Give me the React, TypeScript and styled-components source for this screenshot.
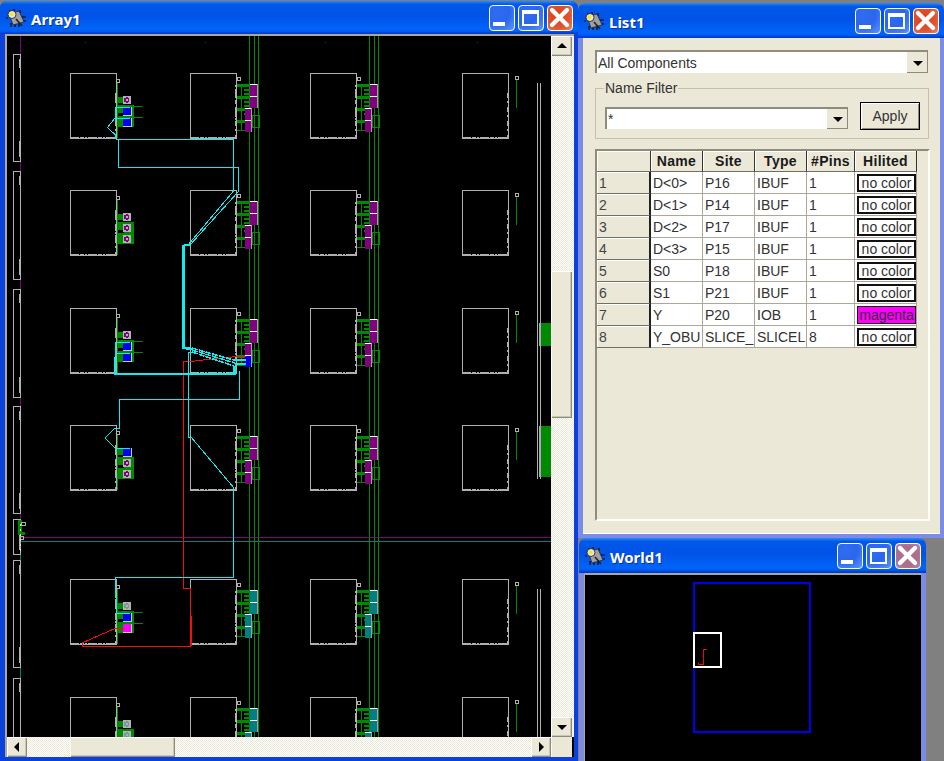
import React from 'react';
import styled, {createGlobalStyle} from 'styled-components';

const GlobalStyle = createGlobalStyle`
    html, body {
        margin: 0;
        padding: 0;
        background: #808080;
    }
    body {
        font-family: "Liberation Sans", Arial, sans-serif;
        font-size: 14px;
        color: #222;
    }
`;

const TAN = '#ebe8d8';
const GREY = '#b0b0b0';
const GREEN = '#008a00';
const PURPLE = '#800080';
const TEAL = '#008080';
const CYAN = '#10ecf0';
const RED = '#f01010';

const COLS_X = [70, 190, 310, 462];
const ROWS_Y = [73, 190, 308, 425, 579, 697];

type Pin = 'grey' | 'blue' | 'magenta';

const PINS: Pin[][] = [
    ['grey', 'blue', 'blue'],
    ['grey', 'grey', 'grey'],
    ['grey', 'blue', 'blue'],
    ['blue', 'grey', 'grey'],
    ['grey', 'blue', 'magenta'],
    ['grey', 'grey', 'grey'],
];

const THIN_ROUTES = [
    '115.5,107 130,107',
    '115.5,107 115.5,118',
    '130,118 115,118 107.5,127.5 115.5,135 116,139',
    '116,139 233.5,139 233.5,191 188,245',
    '118,139 118,167 238,167 238,192 190,245',
    '115,342 130,342',
    '115,342 115.5,357',
    '115,353 130,353',
    '192,352 188.5,352 188.5,437 191,437 234,488 233.5,577 115,577 115,597 116,597 116,613 130,613',
    '239,371 239,399 119.5,399 119.5,428 115,428 105,438 116,449',
    '116,448 130,448',
];

const FAN_ROUTES = ['192,348 237,361', '192,350 235,363', '192,352 234,366'];

const THICK_ROUTES = [
    '183.5,245 190,245',
    '183.5,245 183.5,348 192,349',
    '115,357 115,374 234.5,374 234.5,366',
    '235,360 246,360',
    '235,364 246,364',
];

const RED_ROUTES = [
    '183,361 195,361 203,360 232,357 246,356',
    '183,361 183,588 190.5,588 190.5,646 82,646 82,643 116,628 125,628',
];

const LEFT_STRIPS = [
    [54, 161],
    [171, 279],
    [289, 397],
    [406, 513],
    [519, 554],
    [560, 667],
    [678, 760],
];

const COMPONENTS = [
    {name: 'D<0>', site: 'P16', type: 'IBUF', pins: '1', hilited: 'no color'},
    {name: 'D<1>', site: 'P14', type: 'IBUF', pins: '1', hilited: 'no color'},
    {name: 'D<2>', site: 'P17', type: 'IBUF', pins: '1', hilited: 'no color'},
    {name: 'D<3>', site: 'P15', type: 'IBUF', pins: '1', hilited: 'no color'},
    {name: 'S0', site: 'P18', type: 'IBUF', pins: '1', hilited: 'no color'},
    {name: 'S1', site: 'P21', type: 'IBUF', pins: '1', hilited: 'no color'},
    {name: 'Y', site: 'P20', type: 'IOB', pins: '1', hilited: 'magenta'},
    {name: 'Y_OBU', site: 'SLICE_', type: 'SLICEL', pins: '8', hilited: 'no color'},
];

const ChipBox = ({x, y}: {x: number; y: number}) => (
    <g fill='none' stroke={GREY}>
        <rect x={x + 0.5} y={y + 0.5} width={46} height={65} />
        <line x1={x} y1={y + 65} x2={x + 46} y2={y + 65} strokeWidth={2} strokeDasharray='9 1 4 1 2 1' />
        <line x1={x + 46} y1={y + 20} x2={x + 46} y2={y + 65} strokeWidth={2} strokeDasharray='5 3 2 4' />
    </g>
);

const PinCell = ({y, kind, pins}: {y: number; kind: string; pins: Pin[]}) => {
    const x = 116;
    const hasLines = pins.filter(p => p !== 'grey').length >= 2;
    const centre = kind === 'teal' ? '#6f9a9a' : PURPLE;
    return (
        <g>
            <rect x={x + 0.5} y={y + 6.5} width={3} height={3} fill='none' stroke={GREY} />
            <line x1={x + 1} y1={y + 10} x2={x + 1} y2={y + 65} stroke={GREEN} />
            <rect x={x + 1} y={y + 24} width={7} height={6} fill={GREEN} />
            <rect x={x + 2} y={y + 32} width={16} height={22} fill={GREEN} />
            <rect x={x + 2} y={y + 40} width={6} height={3} fill='#000' />
            <rect x={x - 1} y={y + 23} width={2} height={7} fill={GREY} />
            <rect x={x - 1} y={y + 34} width={2} height={7} fill={GREY} />
            <rect x={x - 1} y={y + 45} width={2} height={7} fill={GREY} />
            {hasLines && <line x1={x + 8} y1={y + 33.5} x2={x + 27} y2={y + 33.5} stroke={GREEN} />}
            {hasLines && <line x1={x + 8} y1={y + 44.5} x2={x + 27} y2={y + 44.5} stroke={GREEN} />}
            {pins.map((pin, i) => {
                const py = y + 23 + i * 11;
                if (pin === 'grey') {
                    return (
                        <g key={i}>
                            <rect x={123} y={py} width={7.5} height={8} fill='#b4b0b4' />
                            <circle cx={126.8} cy={py + 4} r={2} fill='none' stroke={centre} strokeWidth={1.4} />
                        </g>
                    );
                }
                return (
                    <g key={i}>
                        <rect x={123} y={py} width={8} height={8} fill={pin === 'blue' ? '#0000f0' : '#ff00ff'} />
                        <path d={`M123 ${py + 8.5}h8V${py}`} fill='none' stroke='#c8c8c8' />
                    </g>
                );
            })}
        </g>
    );
};

const Slice = ({x, y, w, h, fill}: {x: number; y: number; w: number; h: number; fill: string}) => (
    <g>
        <rect x={x} y={y} width={w} height={h} fill={fill} />
        <path d={`M${x} ${y + 0.5}h${w}`} stroke='#fff' />
        <path d={`M${x + w + 0.5} ${y}v${h}`} stroke='#a89ca8' />
    </g>
);

const SliceCell = ({r, y, fill, last}: {r: number; y: number; fill: string; last: string}) => (
    <g>
        <rect x={r + 1.5} y={y + 4.5} width={3} height={3} fill='none' stroke={GREY} />
        <g stroke={GREEN}>
            <line x1={r + 5.5} y1={y + 12} x2={r + 5.5} y2={y + 57} />
            <line x1={r + 1} y1={y + 12.5} x2={r + 14} y2={y + 12.5} strokeWidth={3} />
            <line x1={r + 8} y1={y + 16.5} x2={r + 14} y2={y + 16.5} strokeWidth={2} />
            <line x1={r + 8} y1={y + 20.5} x2={r + 14} y2={y + 20.5} strokeWidth={2} />
            <line x1={r + 1} y1={y + 24.5} x2={r + 14} y2={y + 24.5} strokeWidth={3} />
            <line x1={r + 8} y1={y + 29} x2={r + 14} y2={y + 29} strokeWidth={2} />
            <line x1={r + 8} y1={y + 32.5} x2={r + 14} y2={y + 32.5} strokeWidth={2} />
            <line x1={r + 1} y1={y + 36.5} x2={r + 9} y2={y + 36.5} strokeWidth={3} />
            <line x1={r + 8} y1={y + 40.5} x2={r + 9} y2={y + 40.5} strokeWidth={2} />
            <line x1={r + 1} y1={y + 48.5} x2={r + 9} y2={y + 48.5} strokeWidth={3} />
            <line x1={r + 1} y1={y + 57.5} x2={r + 9} y2={y + 57.5} />
            <rect x={r + 16.5} y={y + 42.5} width={7} height={12} fill='none' />
        </g>
        <line x1={r} y1={y + 12} x2={r} y2={y + 60} stroke={GREY} strokeWidth={2} strokeDasharray='2 2 4 3' />
        <Slice x={r + 14} y={y + 11} w={7} h={12} fill={fill} />
        <Slice x={r + 14} y={y + 23} w={7} h={12} fill={fill} />
        <Slice x={r + 9} y={y + 35} w={6} h={12} fill={fill} />
        <Slice x={r + 9} y={y + 47} w={6} h={12} fill={last} />
    </g>
);

const Layout = () => (
    <LayoutSvg viewBox='7 36 544 701' width={544} height={701}>
        {[85, 205, 325, 477].map(x => (
            <rect key={x} x={x} y={42} width={1} height={1} fill='#2a3a3a' />
        ))}
        <line x1={20.5} y1={36} x2={20.5} y2={519} stroke={PURPLE} />
        <line x1={20.5} y1={554} x2={20.5} y2={737} stroke={TEAL} />
        <line x1={21} y1={537.5} x2={551} y2={537.5} stroke={PURPLE} />
        <line x1={21} y1={541.5} x2={551} y2={541.5} stroke={TEAL} />
        {[249.5, 254.5, 258.5, 369.5, 374.5, 378.5].map(x => (
            <line key={x} x1={x} y1={36} x2={x} y2={737} stroke={GREEN} />
        ))}
        {LEFT_STRIPS.map(([top, bottom]) => (
            <g key={top} fill='none' stroke={GREY}>
                <rect x={13.5} y={top + 0.5} width={7} height={bottom - top} />
                <line x1={20} y1={top + 5} x2={20} y2={top + 14} strokeWidth={2} />
                <line x1={20} y1={bottom - 20} x2={20} y2={bottom - 4} strokeWidth={2} />
            </g>
        ))}
        <g>
            <rect x={18} y={520} width={4} height={14} fill={GREEN} />
            <rect x={18} y={532} width={7} height={3} fill={GREEN} />
            <rect x={21.5} y={522.5} width={4} height={3} fill='none' stroke={GREY} />
            <rect x={20.5} y={536.5} width={3} height={3} fill='none' stroke={GREY} />
            <line x1={20} y1={524} x2={20} y2={553} stroke='#e0e0e0' strokeDasharray='2 3' />
        </g>
        {ROWS_Y.map(y => COLS_X.map(x => <ChipBox key={`${x}-${y}`} x={x} y={y} />))}
        {ROWS_Y.map((y, i) => (
            <PinCell key={y} y={y} kind={i >= 4 ? 'teal' : 'purple'} pins={PINS[i]} />
        ))}
        {ROWS_Y.map((y, i) => {
            const fill = i >= 4 ? TEAL : PURPLE;
            return (
                <g key={y}>
                    <SliceCell r={236} y={y} fill={fill} last={i === 2 ? '#0000f0' : fill} />
                    <SliceCell r={356} y={y} fill={fill} last={fill} />
                    <rect x={515.5} y={y + 3.5} width={3} height={3} fill='none' stroke={GREY} />
                    <line x1={516.5} y1={y + 7} x2={516.5} y2={y + 35} stroke={GREEN} />
                </g>
            );
        })}
        <line x1={539} y1={83} x2={539} y2={479} stroke={GREY} strokeWidth={4} />
        <line x1={539} y1={83} x2={539} y2={479} stroke='#000' strokeWidth={2} />
        <line x1={539} y1={589} x2={539} y2={737} stroke={GREY} strokeWidth={4} />
        <line x1={539} y1={589} x2={539} y2={737} stroke='#000' strokeWidth={2} />
        <rect x={539} y={323} width={12} height={23} fill={GREEN} />
        <rect x={539} y={426} width={12} height={51} fill={GREEN} />
        <line x1={540} y1={323} x2={540} y2={346} stroke='#a8a8b8' strokeWidth={2} />
        <line x1={540} y1={426} x2={540} y2={477} stroke='#a8a8b8' strokeWidth={2} />
        <g fill='none' stroke={RED}>
            {RED_ROUTES.map(points => (
                <polyline key={points} points={points} />
            ))}
            <line x1={191} y1={616} x2={191} y2={646} strokeWidth={2} />
        </g>
        <g fill='none' stroke={CYAN}>
            {THIN_ROUTES.map(points => (
                <polyline key={points} points={points} />
            ))}
            {FAN_ROUTES.map(points => (
                <polyline key={points} points={points} strokeWidth={1.5} strokeDasharray='6 1' />
            ))}
            {THICK_ROUTES.map(points => (
                <polyline key={points} points={points} strokeWidth={2.4} />
            ))}
        </g>
    </LayoutSvg>
);

const WorldView = () => (
    <WorldSvg viewBox='585 575 335 186' width={335} height={186}>
        <rect x={694} y={583} width={116} height={149} fill='none' stroke='#0000ee' strokeWidth={2} />
        <rect x={694} y={632.5} width={27} height={34} fill='none' stroke='#fff' strokeWidth={2} />
        <path d='M707 649.5h-3.5v14.5h-5.5v-1.5' fill='none' stroke='#e01010' />
    </WorldSvg>
);

const AppIcon = () => (
    <IconSvg viewBox='0 0 20 18' width={20} height={18}>
        <path d='M4 4V1M8 3V0M14 4V1M16 8h4M17 12h3M2 9H0M5 14v4M9 15v3M13 15v3' fill='none' stroke='#000' strokeWidth={1.2} />
        <path d='M3 5l10-3 5 11-11 3z' fill='#a0a0a0' stroke='#222' strokeWidth={0.8} />
        <circle cx={6} cy={5.5} r={4} fill='#e8e8e8' stroke='#222' strokeWidth={0.9} />
        <circle cx={5.6} cy={5.2} r={2} fill='#f4e820' />
        <path d='M10 10l6 7' stroke='#222' strokeWidth={1.6} />
    </IconSvg>
);

const TitleButtons = ({fadedClose}: {fadedClose?: boolean}) => (
    <ButtonRow>
        <TitleButton type='button' aria-label='Minimize'>
            <svg viewBox='0 0 26 26' width={26} height={26}>
                <rect x={4} y={17} width={12} height={4} fill='#fff' />
            </svg>
        </TitleButton>
        <TitleButton type='button' aria-label='Maximize'>
            <svg viewBox='0 0 26 26' width={26} height={26}>
                <path d='M4 5h17v16H4z M6 9v10h13V9z' fill='#fff' fillRule='evenodd' />
            </svg>
        </TitleButton>
        <CloseButton type='button' aria-label='Close' $faded={fadedClose}>
            <svg viewBox='0 0 26 26' width={26} height={26}>
                <path d='M5 5l15 15M20 5L5 20' stroke='#fff' strokeWidth={4.4} strokeLinecap='round' />
            </svg>
        </CloseButton>
    </ButtonRow>
);

const Arrow = ({dir}: {dir: 'up' | 'down' | 'left' | 'right'}) => {
    const points = {
        up: '1,8 11,8 6,3',
        down: '1,4 11,4 6,9',
        left: '8,1 8,11 3,6',
        right: '4,1 4,11 9,6',
    }[dir];
    return (
        <svg viewBox='0 0 12 12' width={12} height={12}>
            <polygon points={points} fill='#000' />
        </svg>
    );
};

const ComboBox = ({value, wide}: {value: string; wide?: boolean}) => (
    <Combo $wide={wide}>
        <ComboText>{value}</ComboText>
        <ComboArrow>
            <Arrow dir='down' />
        </ComboArrow>
    </Combo>
);

const App = () => {
    return (
        <Desktop>
            <GlobalStyle />
            <Window $x={0} $y={1} $w={578} $h={760} $frame='#0a40dc'>
                <TitleBar $h={33}>
                    <AppIcon />
                    <TitleText>Array1</TitleText>
                    <TitleButtons />
                </TitleBar>
                <ArrayClient>
                    <Layout />
                    <VScroll>
                        <ScrollButton $side='v'>
                            <Arrow dir='up' />
                        </ScrollButton>
                        <VThumb />
                        <ScrollButton $side='v'>
                            <Arrow dir='down' />
                        </ScrollButton>
                    </VScroll>
                    <HScroll>
                        <ScrollButton $side='h'>
                            <Arrow dir='left' />
                        </ScrollButton>
                        <HThumb />
                        <ScrollButton $side='h'>
                            <Arrow dir='right' />
                        </ScrollButton>
                    </HScroll>
                    <ScrollCorner />
                </ArrayClient>
            </Window>

            <Window $x={578} $y={3} $w={366} $h={535} $frame='#7c8ce4'>
                <TitleBar $h={35}>
                    <AppIcon />
                    <TitleText>List1</TitleText>
                    <TitleButtons />
                </TitleBar>
                <ListClient>
                    <ComboBox value='All Components' wide />
                    <GroupBox>
                        <GroupLabel>Name Filter</GroupLabel>
                        <ComboBox value='*' />
                        <ApplyButton type='button'>Apply</ApplyButton>
                    </GroupBox>
                    <TablePanel>
                        <Grid>
                            <colgroup>
                                <col width={54} />
                                <col width={52} />
                                <col width={52} />
                                <col width={52} />
                                <col width={48} />
                                <col width={62} />
                            </colgroup>
                            <thead>
                                <tr>
                                    <HeadCell />
                                    <HeadCell>Name</HeadCell>
                                    <HeadCell>Site</HeadCell>
                                    <HeadCell>Type</HeadCell>
                                    <HeadCell>#Pins</HeadCell>
                                    <HeadCell>Hilited</HeadCell>
                                </tr>
                            </thead>
                            <tbody>
                                {COMPONENTS.map((item, index) => (
                                    <tr key={item.name}>
                                        <RowHead>{index + 1}</RowHead>
                                        <Cell>{item.name}</Cell>
                                        <Cell>{item.site}</Cell>
                                        <Cell>{item.type}</Cell>
                                        <Cell>{item.pins}</Cell>
                                        <Cell>
                                            <ColorChip $on={item.hilited !== 'no color'}>{item.hilited}</ColorChip>
                                        </Cell>
                                    </tr>
                                ))}
                            </tbody>
                        </Grid>
                    </TablePanel>
                </ListClient>
            </Window>

            <Window $x={579} $y={538} $w={347} $h={223} $frame='#7c8ce4' $flatBottom>
                <TitleBar $h={35}>
                    <AppIcon />
                    <TitleText>World1</TitleText>
                    <TitleButtons fadedClose />
                </TitleBar>
                <WorldClient>
                    <WorldView />
                </WorldClient>
            </Window>
        </Desktop>
    );
};

export default App;

const Desktop = styled.main`
    position: relative;
    width: 944px;
    height: 761px;
    overflow: hidden;
    background: #808080;
`;

const Window = styled.section<{$x: number; $y: number; $w: number; $h: number; $frame: string; $flatBottom?: boolean}>`
    position: absolute;
    left: ${p => p.$x}px;
    top: ${p => p.$y}px;
    width: ${p => p.$w}px;
    height: ${p => p.$h}px;
    box-sizing: border-box;
    display: flex;
    flex-direction: column;
    background: ${p => p.$frame};
    border-radius: 7px 7px 0 0;
    padding: 0 5px ${p => (p.$flatBottom ? 0 : 4)}px 5px;
`;

const TitleBar = styled.header<{$h: number}>`
    flex: none;
    height: ${p => p.$h}px;
    margin: 0 -5px;
    padding: 0 5px 0 6px;
    display: flex;
    align-items: center;
    border-radius: 7px 7px 0 0;
    background: linear-gradient(
        180deg,
        #2a8cf6 0,
        #0058ea 10%,
        #0053e6 45%,
        #0064fa 85%,
        #005bf0 92%,
        #003dd2 97%,
        #003dd2 100%
    );
`;

const IconSvg = styled.svg`
    flex: none;
`;

const TitleText = styled.h2`
    flex: 1;
    margin: 2px 0 0 5px;
    font-family: "Noto Sans", "Liberation Sans", sans-serif;
    font-size: 15px;
    font-weight: 700;
    color: #fff;
    text-shadow: 1px 1px 0 #0a2f9c;
`;

const ButtonRow = styled.div`
    display: flex;
    gap: 3px;
`;

const TitleButton = styled.button`
    width: 26px;
    height: 26px;
    padding: 0;
    display: block;
    box-sizing: border-box;
    border: 1px solid #fff;
    border-radius: 4px;
    background: radial-gradient(circle at 30% 25%, #2f6df0 0, #2a66ee 50%, #5f94fa 100%);
    overflow: hidden;

    svg {
        display: block;
        margin: -1px;
    }
`;

const CloseButton = styled(TitleButton)<{$faded?: boolean}>`
    background: ${p =>
        p.$faded
            ? 'radial-gradient(circle at 50% 50%, #b0708c 0, #ac6e8c 60%, #b88aa4 100%)'
            : 'radial-gradient(circle at 40% 40%, #d8401c 0, #e0552e 60%, #ee8860 100%)'};
`;

const ArrayClient = styled.div`
    flex: 1;
    min-height: 0;
    margin-left: 0;
    border-top: 2px solid #aca899;
    border-left: 2px solid #aca899;
    margin-right: -1px;
    display: grid;
    grid-template-columns: 544px 1fr;
    grid-template-rows: 701px 20px;
    background: #000;
`;

const LayoutSvg = styled.svg`
    display: block;
    background: #000;
    shape-rendering: crispEdges;
`;

const WorldSvg = styled.svg`
    display: block;
    background: #000;
    shape-rendering: crispEdges;
`;

const scrollTrack = `
    background-color: ${TAN};
    background-image: repeating-conic-gradient(#fff 0 25%, ${TAN} 0 50%);
    background-size: 2px 2px;
`;

const VScroll = styled.div`
    ${scrollTrack}
    display: flex;
    flex-direction: column;
    align-items: flex-start;
    justify-content: space-between;
    position: relative;
`;

const HScroll = styled.div`
    ${scrollTrack}
    display: flex;
    justify-content: space-between;
    position: relative;
`;

const ScrollCorner = styled.div`
    background: ${TAN};
    width: 21px;
    box-shadow: inset 1px 0 0 #fff;
`;

const ScrollButton = styled.div<{$side: 'v' | 'h'}>`
    width: ${p => (p.$side === 'v' ? 21 : 20)}px;
    height: 20px;
    display: flex;
    align-items: center;
    justify-content: center;
    background: ${TAN};
    box-shadow: inset 1px 1px 0 #fff, inset -1px -1px 0 #8d8a7c, inset -2px -2px 0 #c9c6b6;
`;

/* thumbs lie over their track */
const VThumb = styled.div`
    position: absolute;
    top: 235px;
    left: 0;
    width: 21px;
    height: 147px;
    background: ${TAN};
    box-shadow: inset 1px 1px 0 #fff, inset -1px -1px 0 #8d8a7c, inset -2px -2px 0 #c9c6b6;
`;

const HThumb = styled.div`
    position: absolute;
    top: 0;
    left: 63px;
    width: 105px;
    height: 20px;
    background: ${TAN};
    box-shadow: inset 1px 1px 0 #fff, inset -1px -1px 0 #8d8a7c, inset -2px -2px 0 #c9c6b6;
`;

const ListClient = styled.div`
    flex: 1;
    min-height: 0;
    margin-right: -1px;
    padding: 12px 10px 13px 12px;
    display: flex;
    flex-direction: column;
    background: ${TAN};
    box-shadow: inset 0 -1px 0 #fff;
`;

const Combo = styled.div<{$wide?: boolean}>`
    flex: none;
    width: ${p => (p.$wide ? '333px' : '243px')};
    height: ${p => (p.$wide ? 23 : 22)}px;
    box-sizing: border-box;
    display: flex;
    align-items: center;
    justify-content: space-between;
    background: #fff;
    border-top: 2px solid #8f8c7c;
    border-left: 2px solid #8f8c7c;
`;

const ComboText = styled.span`
    padding-left: 1px;
    font-size: 14px;
    color: #333;
`;

const ComboArrow = styled.span`
    width: 21px;
    height: 100%;
    display: flex;
    align-items: center;
    justify-content: center;
    background: ${TAN};
    box-shadow: inset -1px -1px 0 #8d8a7c;
`;

const GroupBox = styled.fieldset`
    position: relative;
    flex: none;
    margin: 15px 0 0;
    width: 334px;
    height: 51px;
    box-sizing: border-box;
    padding: 13px 0 0 9px;
    border: 1px solid #c4c1b0;
    display: flex;
    align-items: flex-start;
    gap: 12px;

    & > div {
        margin-top: 5px;
    }
`;

const GroupLabel = styled.span`
    position: absolute;
    top: -9px;
    left: 8px;
    padding: 0 1px;
    background: ${TAN};
    font-size: 14px;
    color: #333;
`;

const ApplyButton = styled.button`
    width: 60px;
    height: 28px;
    padding: 0;
    box-sizing: border-box;
    border: 1px solid #000;
    background: ${TAN};
    box-shadow: inset 1px 1px 0 #fff, inset -1px -1px 0 #8d8a7c;
    font-family: "Liberation Sans", sans-serif;
    font-size: 14px;
    color: #333;
`;

const TablePanel = styled.div`
    flex: 1;
    min-height: 0;
    margin-top: 10px;
    width: 335px;
    box-sizing: border-box;
    border: 2px solid #fdfdf6;
    border-top-color: #8f8c7c;
    border-left-color: #8f8c7c;
`;

const Grid = styled.table`
    table-layout: fixed;
    width: 320px;
    border-collapse: separate;
    border-spacing: 0;
    font-size: 14px;
`;

const HeadCell = styled.th`
    height: 21px;
    padding: 0;
    box-sizing: border-box;
    background: ${TAN};
    border-right: 1px solid #333;
    border-bottom: 1px solid #716f64;
    box-shadow: inset 1px 1px 0 #fff;
    font-weight: 700;
    color: #1a1a1a;
    text-align: center;
    letter-spacing: 0.3px;
`;

const RowHead = styled.td`
    height: 22px;
    padding: 0 0 0 2px;
    box-sizing: border-box;
    background: ${TAN};
    border-right: 2px solid #222;
    border-bottom: 1px solid #716f64;
    box-shadow: inset 1px 1px 0 #fff;
    color: #444;
`;

const Cell = styled.td`
    height: 22px;
    padding: 0 0 0 2px;
    box-sizing: border-box;
    background: #fff;
    border-right: 1px solid #aca899;
    border-bottom: 1px solid #aca899;
    color: #333;
    white-space: nowrap;
    overflow: hidden;
`;

const ColorChip = styled.div<{$on: boolean}>`
    width: 59px;
    height: 18px;
    box-sizing: border-box;
    border: ${p => (p.$on ? '1px solid #111' : '2px solid #111')};
    background: ${p => (p.$on ? '#ff00ff' : '#fff')};
    color: #333;
    line-height: ${p => (p.$on ? 16 : 14)}px;
    text-align: center;
    font-size: 14px;
    overflow: hidden;
`;

const WorldClient = styled.div`
    flex: 1;
    min-height: 0;
    margin-right: 0;
    border-top: 2px solid #aca899;
    border-left: 1px solid #aca899;
    background: #000;
`;
